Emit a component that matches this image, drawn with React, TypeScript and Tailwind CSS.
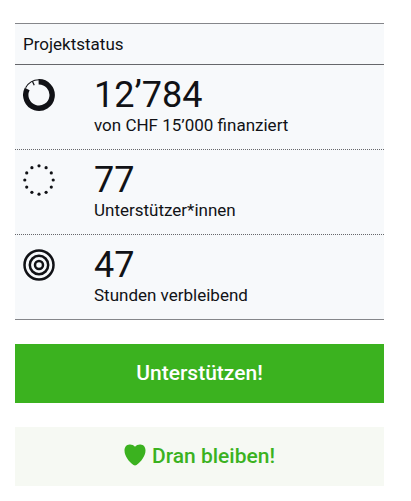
import type { ReactNode } from "react";

const FundedIcon = () => (
    <svg width="32" height="32" viewBox="0 0 32 32" fill="none" stroke="currentColor" aria-hidden="true">
        <path d="M15.6 2.8A13.2 13.2 0 1 1 4.2 10" strokeWidth="5.4" />
        <path d="M2.6 8.8A15.3 15.3 0 0 1 16 .7" strokeWidth="1.1" />
        <path d="M9.4 2.2L11.2 6.2" strokeWidth="1.2" />
    </svg>
);

const dots = Array.from({ length: 12 }, (_, i) => {
    const angle = (i * Math.PI) / 6;
    return { cx: 16 + 14.2 * Math.cos(angle), cy: 16 + 14.2 * Math.sin(angle) };
});

const SupportersIcon = () => (
    <svg width="32" height="32" viewBox="0 0 32 32" fill="currentColor" aria-hidden="true">
        {dots.map((dot, i) => (
            <circle key={i} cx={dot.cx} cy={dot.cy} r="1.6" />
        ))}
    </svg>
);

const TimeIcon = () => (
    <svg width="32" height="32" viewBox="0 0 32 32" fill="none" stroke="currentColor" strokeWidth="2.5" aria-hidden="true">
        <circle cx="16" cy="16" r="14.5" />
        <circle cx="16" cy="16" r="9.2" />
        <circle cx="16" cy="16" r="4" />
    </svg>
);

const HeartIcon = () => (
    <svg width="22" height="22" viewBox="0 0 22 22" fill="currentColor" className="mb-1" aria-hidden="true">
        <path d="M11 2.8C9.6 1 7.6.4 5.6.5 2.3.7.5 3.2.5 6.6c0 5.8 4.8 11.6 9 14.4 1 .6 2 .6 3 0 4.2-2.8 9-8.6 9-14.4 0-3.4-1.8-5.9-5.1-6.1-2-.1-4 .5-5.4 2.3z" />
    </svg>
);

const stats: { icon: ReactNode; value: string; label: string }[] = [
    { icon: <FundedIcon />, value: "12’784", label: "von CHF 15’000 finanziert" },
    { icon: <SupportersIcon />, value: "77", label: "Unterstützer*innen" },
    { icon: <TimeIcon />, value: "47", label: "Stunden verbleibend" },
];

export default function App() {
    return (
        <main className="bg-white pl-[15px] pr-[27px] pt-[23px] pb-4 font-['Roboto',sans-serif] text-[#111216]">
            {/* Project status */}
            <section className="bg-[#f7f9fb] border-y border-[#85868a]">
                <h2 className="px-2 py-2 text-[17px] leading-6 font-normal border-b border-[#66676b]">Projektstatus</h2>
                <ul className="divide-y divide-dotted divide-[#66676b]">
                    {stats.map((stat) => (
                        <li key={stat.label} className="flex pt-3 pb-[11px] pl-2">
                            <div className="w-[71px] shrink-0 pt-0.5">{stat.icon}</div>
                            <div>
                                <p className="text-[36px] leading-9">{stat.value}</p>
                                <p className="text-[17px] leading-[25px]">{stat.label}</p>
                            </div>
                        </li>
                    ))}
                </ul>
            </section>

            {/* Actions */}
            <button type="button" className="mt-6 flex w-full items-center justify-center bg-[#3bb21f] py-4 text-[21px] leading-[27px] font-medium text-white">
                Unterstützen!
            </button>
            <button type="button" className="mt-6 flex w-full items-center justify-center gap-1.5 bg-[#f6f9f3] py-4 text-[21px] leading-[27px] font-medium text-[#3bb21f]">
                <HeartIcon />
                Dran bleiben!
            </button>
        </main>
    );
}
